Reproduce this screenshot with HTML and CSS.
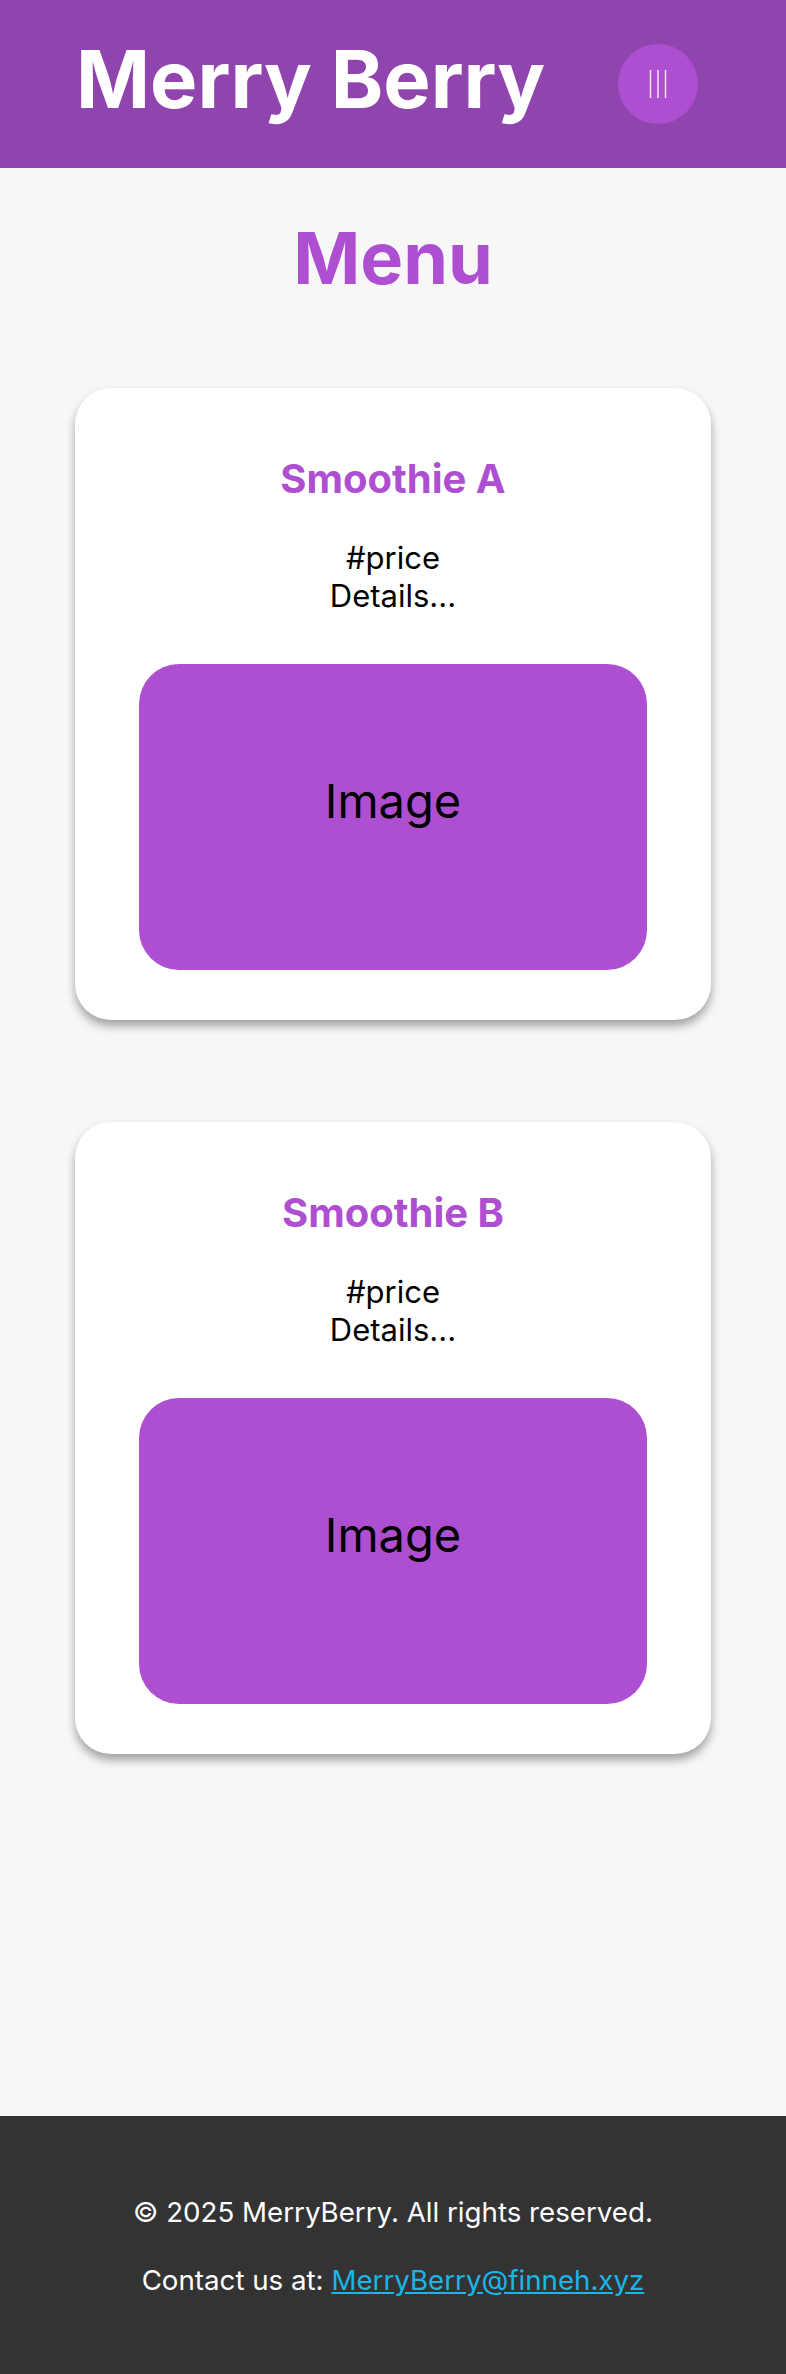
FILE: index.html
```html
<!DOCTYPE html>
<html lang="en">
<head>
<meta charset="utf-8">
<title>Merry Berry</title>
<link rel="stylesheet" href="styles.css">
</head>
<body>
<header class="site-header">
  <h1 class="brand">Merry Berry</h1>
  <button class="menu-btn" aria-label="Open menu">
    <svg width="20" height="30" viewBox="0 0 20 30" aria-hidden="true">
      <line x1="2.5" y1="1" x2="2.5" y2="29" />
      <line x1="10" y1="1" x2="10" y2="29" />
      <line x1="17.5" y1="1" x2="17.5" y2="29" />
    </svg>
  </button>
</header>
<main class="content">
  <h2 class="page-title">Menu</h2>
  <section class="card">
    <h3 class="card-title">Smoothie A</h3>
    <p class="card-text">#price<br>Details...</p>
    <div class="card-image">Image</div>
  </section>
  <section class="card">
    <h3 class="card-title">Smoothie B</h3>
    <p class="card-text">#price<br>Details...</p>
    <div class="card-image">Image</div>
  </section>
</main>
<footer class="site-footer">
  <p class="footer-line">© 2025 MerryBerry. All rights reserved.</p>
  <p class="footer-line">Contact us at: <a class="footer-link" href="#">MerryBerry@finneh.xyz</a></p>
</footer>
</body>
</html>
```
FILE: styles.css
```css
* { box-sizing: border-box; }
html, body { margin: 0; padding: 0; }
body {
  min-height: 100vh;
  display: flex;
  flex-direction: column;
  background: #f7f7f7;
  font-family: "Inter", "Noto Sans", sans-serif;
  color: #000;
}
.site-header {
  height: 168px;
  background: #8f45ad;
  display: flex;
  align-items: center;
  padding-left: 76px;
}
.brand {
  margin: 0 0 10px 0;
  font-size: 79.5px;
  font-weight: 700;
  color: #fff;
  line-height: 1.21;
}
.menu-btn {
  margin-left: 73px;
  width: 80px;
  height: 80px;
  border-radius: 50%;
  border: 0;
  padding: 0;
  background: #ae4fd2;
  display: flex;
  align-items: center;
  justify-content: center;
}
.menu-btn svg line { stroke: #f3e6f8; stroke-width: 1.5; }
.content {
  flex: 1;
  display: flex;
  flex-direction: column;
  align-items: center;
  padding-top: 46px;
}
.page-title {
  margin: 0 0 87px 0;
  font-size: 72px;
  font-weight: 700;
  color: #ae4fd2;
  line-height: 1.21;
}
.card {
  width: 636px;
  background: #fff;
  border-radius: 36px;
  box-shadow: 0 6px 10px rgba(0, 0, 0, 0.35);
  padding: 67px 64px 50px;
  margin-bottom: 102px;
  text-align: center;
}
.card-title {
  margin: 0;
  font-size: 40px;
  font-weight: 700;
  color: #ae4fd2;
  line-height: 1.18;
}
.card-text {
  margin: 37px 0 50px;
  font-size: 31px;
  line-height: 1.21;
}
.card-image {
  height: 306px;
  background: #ae4fd2;
  border-radius: 40px;
  font-size: 47px;
  line-height: 1.21;
  padding-top: 109px;
}
.site-footer {
  height: 258px;
  background: #333;
  color: #fff;
  text-align: center;
  padding-top: 80px;
}
.footer-line {
  margin: 0 0 34px;
  font-size: 27.7px;
  line-height: 1.21;
}
.footer-link { color: #1ab6e8; }
```
